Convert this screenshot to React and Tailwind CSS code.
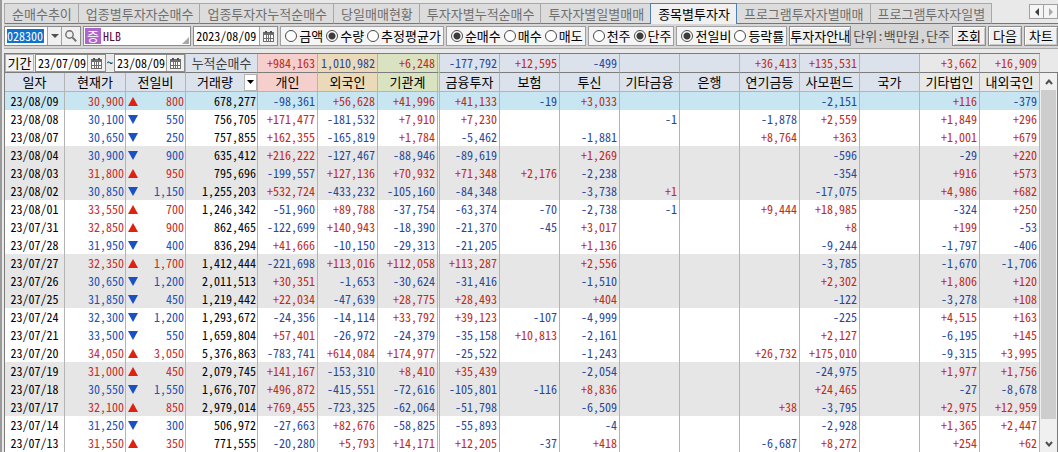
import React, { useState } from "react";

const TABS = [
  "순매수추이",
  "업종별투자자순매수",
  "업종투자자누적순매수",
  "당일매매현황",
  "투자자별누적순매수",
  "투자자별일별매매",
  "종목별투자자",
  "프로그램투자자별매매",
  "프로그램투자자일별",
];

const INVESTORS = [
  { name: "개인", total: "+984,163", bg: "bg-[#f5cfcb]" },
  { name: "외국인", total: "1,010,982", bg: "bg-[#ebdab9]" },
  { name: "기관계", total: "+6,248", bg: "bg-[#d9e3c1]" },
  { name: "금융투자", total: "-177,792", bg: "bg-[#dbe2ec]" },
  { name: "보험", total: "+12,595", bg: "bg-[#dbe2ec]" },
  { name: "투신", total: "-499", bg: "bg-[#dbe2ec]" },
  { name: "기타금융", total: "", bg: "bg-[#dbe2ec]" },
  { name: "은행", total: "", bg: "bg-[#dbe2ec]" },
  { name: "연기금등", total: "+36,413", bg: "bg-[#dbe2ec]" },
  { name: "사모펀드", total: "+135,531", bg: "bg-[#dbe2ec]" },
  { name: "국가", total: "", bg: "bg-[#dbe2ec]" },
  { name: "기타법인", total: "+3,662", bg: "bg-[#e8e8e8]" },
  { name: "내외국인", total: "+16,909", bg: "bg-[#e8e8e8]" },
];

// date, price, change (signed), volume, then one value per investor
const ROWS = [
  ["23/08/09", "30,900", "+800", "678,277", "-98,361", "+56,628", "+41,996", "+41,133", "-19", "+3,033", "", "", "", "-2,151", "", "+116", "-379"],
  ["23/08/08", "30,100", "-550", "756,705", "+171,477", "-181,532", "+7,910", "+7,230", "", "", "-1", "", "-1,878", "+2,559", "", "+1,849", "+296"],
  ["23/08/07", "30,650", "-250", "757,855", "+162,355", "-165,819", "+1,784", "-5,462", "", "-1,881", "", "", "+8,764", "+363", "", "+1,001", "+679"],
  ["23/08/04", "30,900", "-900", "635,412", "+216,222", "-127,467", "-88,946", "-89,619", "", "+1,269", "", "", "", "-596", "", "-29", "+220"],
  ["23/08/03", "31,800", "+950", "795,696", "-199,557", "+127,136", "+70,932", "+71,348", "+2,176", "-2,238", "", "", "", "-354", "", "+916", "+573"],
  ["23/08/02", "30,850", "-1,150", "1,255,203", "+532,724", "-433,232", "-105,160", "-84,348", "", "-3,738", "+1", "", "", "-17,075", "", "+4,986", "+682"],
  ["23/08/01", "33,550", "+700", "1,246,342", "-51,960", "+89,788", "-37,754", "-63,374", "-70", "-2,738", "-1", "", "+9,444", "+18,985", "", "-324", "+250"],
  ["23/07/31", "32,850", "+900", "862,465", "-122,699", "+140,943", "-18,390", "-21,370", "-45", "+3,017", "", "", "", "+8", "", "+199", "-53"],
  ["23/07/28", "31,950", "-400", "836,294", "+41,666", "-10,150", "-29,313", "-21,205", "", "+1,136", "", "", "", "-9,244", "", "-1,797", "-406"],
  ["23/07/27", "32,350", "+1,700", "1,412,444", "-221,698", "+113,016", "+112,058", "+113,287", "", "+2,556", "", "", "", "-3,785", "", "-1,670", "-1,706"],
  ["23/07/26", "30,650", "-1,200", "2,011,513", "+30,351", "-1,653", "-30,624", "-31,416", "", "-1,510", "", "", "", "+2,302", "", "+1,806", "+120"],
  ["23/07/25", "31,850", "-450", "1,219,442", "+22,034", "-47,639", "+28,775", "+28,493", "", "+404", "", "", "", "-122", "", "-3,278", "+108"],
  ["23/07/24", "32,300", "-1,200", "1,293,672", "-24,356", "-14,114", "+33,792", "+39,123", "-107", "-4,999", "", "", "", "-225", "", "+4,515", "+163"],
  ["23/07/21", "33,500", "-550", "1,659,804", "+57,401", "-26,972", "-24,379", "-35,158", "+10,813", "-2,161", "", "", "", "+2,127", "", "-6,195", "+145"],
  ["23/07/20", "34,050", "+3,050", "5,376,863", "-783,741", "+614,084", "+174,977", "-25,522", "", "-1,243", "", "", "+26,732", "+175,010", "", "-9,315", "+3,995"],
  ["23/07/19", "31,000", "+450", "2,079,745", "+141,167", "-153,310", "+8,410", "+35,439", "", "-2,054", "", "", "", "-24,975", "", "+1,977", "+1,756"],
  ["23/07/18", "30,550", "-1,550", "1,676,707", "+496,872", "-415,551", "-72,616", "-105,801", "-116", "+8,836", "", "", "", "+24,465", "", "-27", "-8,678"],
  ["23/07/17", "32,100", "+850", "2,979,014", "+769,455", "-723,325", "-62,064", "-51,798", "", "-6,509", "", "", "+38", "-3,795", "", "+2,975", "+12,959"],
  ["23/07/14", "31,250", "-300", "506,972", "-27,663", "+82,676", "-58,825", "-55,893", "", "-4", "", "", "", "-2,928", "", "+1,365", "+2,447"],
  ["23/07/13", "31,550", "+350", "771,555", "-20,280", "+5,793", "+14,171", "+12,205", "-37", "+418", "", "", "-6,687", "+8,272", "", "+254", "+62"],
];

const toneOf = (value) => (value.startsWith("+") ? "text-[#c0281e]" : "text-[#1f489c]");

// the institution total is closed by a double line
const edgeOf = (i) => (i === 2 ? "border-r-3 [border-right-style:double]" : "border-r");

function rowBg(i) {
  if (i === 0) return "bg-[#c8e6f1]";
  return (i >= 3 && i <= 5) || (i >= 9 && i <= 11) || (i >= 15 && i <= 17) ? "bg-[#e6e6e6]" : "bg-white";
}

function CalendarIcon() {
  return (
    <svg width="11" height="11" viewBox="0 0 11 11" shapeRendering="crispEdges" aria-hidden="true">
      <path d="M0 1h11v10H0z" fill="#6e6e6e" />
      <path d="M2 0h2v2H2zM7 0h2v2H7z" fill="#505050" />
      <path d="M1 4h2v3H1zM4 4h1v3H4zM6 4h1v3H6zM8 4h2v3H8zM1 8h2v2H1zM4 8h1v2H4zM6 8h1v2H6zM8 8h2v2H8z" fill="#fff" />
    </svg>
  );
}

function DateField({ label, value, className }) {
  return (
    <div className={`flex border border-[#8c8c8c] bg-white text-[12px] ${className}`}>
      <input aria-label={label} defaultValue={value} className="w-0 min-w-0 flex-1 pl-0.5 outline-none" />
      <button aria-label={`${label} 달력`} className="flex w-[18px] shrink-0 items-center justify-center border-l border-[#a0a0a0] bg-[#f0f0f0]">
        <CalendarIcon />
      </button>
    </div>
  );
}

function RadioGroup({ name, options, initial }) {
  const [picked, setPicked] = useState(initial);
  return (
    <div role="radiogroup" aria-label={name} className="flex shrink-0 items-center gap-[3px] border border-[#a0a0a0] bg-[#f5f5f5] pr-0.5 pl-1">
      {options.map((option) => (
        <label key={option} className="flex items-center gap-0.5">
          <input
            type="radio"
            name={name}
            checked={picked === option}
            onChange={() => setPicked(option)}
            className="size-3 appearance-none rounded-full border border-[#4a4a4a] bg-white checked:bg-[radial-gradient(circle,#3c3c3c_0_3px,#fff_4px)]"
          />
          {option}
        </label>
      ))}
    </div>
  );
}

function ToolButton({ children, className }) {
  return (
    <button className={`flex shrink-0 items-center justify-center border border-[#8c8c8c] bg-[#f0f0f0] shadow-[inset_1px_1px_0_#fff,inset_-1px_-1px_0_#c8c8c8] ${className}`}>
      {children}
    </button>
  );
}

export default function App() {
  const [tab, setTab] = useState("종목별투자자");

  return (
    <div className="overflow-hidden border-l-2 border-[#9a9a9a] bg-[#e9e9e9] pl-0.5 font-['Noto_Sans_Mono_CJK_KR','Noto_Sans_CJK_KR',monospace] text-[13px] leading-4 whitespace-nowrap text-black">
      <div className="flex border-b border-[#4f7fb8] pt-[3px]">
        <div role="tablist" className="-mb-px flex border-l border-[#a8a8a8]">
          {TABS.map((name) => (
            <button
              key={name}
              role="tab"
              aria-selected={tab === name}
              onClick={() => setTab(name)}
              className={`h-[21px] border-t border-r pr-1.5 pl-[7px] ${
                tab === name
                  ? "border-[#4f7fb8] bg-[#f0f0f0] shadow-[-1px_0_0_#4f7fb8]"
                  : "border-t-[#a8a8a8] border-r-[#a8a8a8] border-b border-b-[#4f7fb8] bg-[#dcdcdc] text-[#6e6e6e]"
              }`}
            >
              {name}
            </button>
          ))}
        </div>
        <div className="mt-px ml-auto flex">
          <button aria-label="이전 탭" className="flex h-[15px] w-[15px] items-center justify-center border border-[#a0a0a0] bg-[#f5f5f5]">
            <svg width="4" height="8" viewBox="0 0 4 8" aria-hidden="true"><path d="M4 0v8L0 4z" fill="#404040" /></svg>
          </button>
          <button aria-label="다음 탭" className="flex h-[15px] w-[14px] items-center justify-center border border-l-0 border-[#a0a0a0] bg-[#f5f5f5]">
            <svg width="4" height="8" viewBox="0 0 4 8" aria-hidden="true"><path d="M0 0v8l4-4z" fill="#a8a8a8" /></svg>
          </button>
        </div>
      </div>

      <div className="flex h-[25px] gap-0.5 border-b border-[#a8a8a8] bg-[#d6d6d6] py-0.5">
        <div className="flex w-[77px] shrink-0 border border-[#8c8c8c] bg-white text-[12px]">
          <input aria-label="종목코드" defaultValue="028300" className="my-0.5 ml-0.5 w-[37px] bg-[#0f72cc] text-white outline-none" />
          <button aria-label="종목 목록" className="ml-auto flex w-[14px] items-center justify-center border-l border-[#a0a0a0] bg-[#f0f0f0]">
            <svg width="8" height="4" viewBox="0 0 8 4" aria-hidden="true"><path d="M0 0h8L4 4z" fill="#505050" /></svg>
          </button>
          <button aria-label="종목 검색" className="flex w-[19px] items-center justify-center border-l border-[#a0a0a0] bg-[#f0f0f0]">
            <svg width="12" height="12" viewBox="0 0 12 12" fill="none" stroke="#707070" aria-hidden="true">
              <circle cx="4.5" cy="4.5" r="3.7" strokeWidth="1.4" />
              <path d="M7.4 7.4l3.8 3.8" strokeWidth="2" />
            </svg>
          </button>
        </div>
        <div className="relative flex min-w-[60px] flex-[0_1_109px] items-center border border-[#8c8c8c] bg-white pl-px">
          <span className="w-4 bg-[#b065cc] text-center text-white">증</span>
          <input aria-label="종목명" defaultValue="HLB" className="min-w-0 flex-1 pl-0.5 text-[12px] text-[#5a0a3c] outline-none" />
          <svg width="7" height="7" viewBox="0 0 7 7" className="absolute right-px bottom-px" aria-hidden="true"><path d="M7 0v7H0z" fill="#a8a8a8" /></svg>
        </div>
        <DateField label="기준일" value="2023/08/09" className="w-[85px] shrink-0" />
        <RadioGroup name="값" options={["금액", "수량", "추정평균가"]} initial="수량" />
        <RadioGroup name="매매" options={["순매수", "매수", "매도"]} initial="순매수" />
        <RadioGroup name="주" options={["천주", "단주"]} initial="단주" />
        <RadioGroup name="비교" options={["전일비", "등락률"]} initial="전일비" />
        <ToolButton className="w-[62px]">투자자안내</ToolButton>
        <span className="flex flex-1 items-center justify-center text-[#505050]">단위:백만원,단주</span>
        <ToolButton className="w-[34px]">조회</ToolButton>
        <ToolButton className="w-[34px]">다음</ToolButton>
        <ToolButton className="w-[34px]">차트</ToolButton>
      </div>

      <div className="mt-1 flex">
        <table className="w-full min-w-0 flex-1 table-fixed border-separate border-spacing-0 border-t border-l border-[#7c7c7c]">
          <colgroup>
            <col className="w-[60px]" />
            <col className="w-[61px]" />
            <col className="w-[60px]" />
            <col className="w-[72px]" />
            {INVESTORS.map((inv, i) => (
              <col key={inv.name} className={i === 2 ? "w-[62px]" : "w-[60px]"} />
            ))}
          </colgroup>
          <thead>
            <tr className="h-[19px]">
              <td colSpan={3} className="border-r border-b border-[#7c7c7c] border-r-[#b4b4b4] bg-[#e9e9e9] p-0">
                <div className="flex h-[18px] gap-px">
                  <span className="w-[29px] shrink-0 border border-[#b4b4b4] bg-[#f2f2f2] text-center">기간</span>
                  <DateField label="시작일" value="23/07/09" className="min-w-0 flex-1" />
                  <span className="w-1.5 shrink-0 text-center text-[12px]">~</span>
                  <DateField label="종료일" value="23/08/09" className="min-w-0 flex-1" />
                </div>
              </td>
              <th scope="row" className="border-r border-b border-[#7c7c7c] border-r-[#b4b4b4] bg-[#dbe2ec] p-0 font-normal text-[#404040]">누적순매수</th>
              {INVESTORS.map((inv, i) => (
                <td key={inv.name} className={`border-b border-[#7c7c7c] border-r-[#b4b4b4] p-0 pr-0.5 text-right text-[12px] ${edgeOf(i)} ${inv.bg} ${toneOf(inv.total)}`}>
                  {inv.total}
                </td>
              ))}
            </tr>
            <tr className="h-[19px]">
              {["일자", "현재가", "전일비"].map((name) => (
                <th key={name} scope="col" className="border-r border-b border-[#b4b4b4] bg-[#dbe2ec] p-0 font-normal">{name}</th>
              ))}
              <th scope="col" className="border-r border-b border-[#b4b4b4] bg-[#dbe2ec] p-0 font-normal">
                <div className="flex h-[18px] items-center">
                  <span className="flex-1">거래량</span>
                  <button aria-label="거래량 선택" className="flex h-[17px] w-[13px] items-center justify-center border border-[#b4b4b4] bg-white">
                    <svg width="7" height="4" viewBox="0 0 7 4" aria-hidden="true"><path d="M0 0h7L3.5 4z" fill="#000" /></svg>
                  </button>
                </div>
              </th>
              {INVESTORS.map((inv, i) => (
                <th key={inv.name} scope="col" className={`border-b border-[#b4b4b4] p-0 font-normal ${edgeOf(i)} ${inv.bg}`}>{inv.name}</th>
              ))}
            </tr>
          </thead>
          <tbody className="text-[12px]">
            {ROWS.map(([date, price, change, volume, ...values], r) => {
              const up = change.startsWith("+");
              const tone = up ? "text-[#cc2a1e]" : "text-[#1e50b8]";
              return (
                <tr key={date} className={`h-[18px] ${rowBg(r)}`}>
                  <td className="border-r border-[#b4b4b4] p-0 text-center">{date}</td>
                  <td className={`border-r border-[#b4b4b4] p-0 pr-px text-right ${tone}`}>{price}</td>
                  <td className={`border-r border-[#b4b4b4] p-0 ${tone}`}>
                    <div className="flex items-center justify-between pr-px pl-0.5">
                      <svg width="10" height="9" viewBox="0 0 10 9" role="img" aria-label={up ? "상승" : "하락"}>
                        <path d={up ? "M5 0l5 9H0z" : "M0 0h10L5 9z"} fill={up ? "#e02010" : "#1a50c4"} />
                      </svg>
                      {change.slice(1)}
                    </div>
                  </td>
                  <td className="border-r border-[#b4b4b4] p-0 pr-px text-right">{volume}</td>
                  {values.map((value, i) => (
                    <td key={i} className={`border-[#b4b4b4] p-0 pr-0.5 text-right ${edgeOf(i)} ${toneOf(value)}`}>{value}</td>
                  ))}
                </tr>
              );
            })}
          </tbody>
        </table>
        <div className="mt-[19px] flex w-[18px] shrink-0 flex-col border-t border-r border-[#7c7c7c] bg-[#f0f0f0] px-px">
          <button aria-label="위로" className="flex h-[17px] items-center justify-center">
            <svg width="8" height="6" viewBox="0 0 8 6" fill="none" stroke="#505050" strokeWidth="2" aria-hidden="true"><path d="M1 5l3-3.5L7 5" /></svg>
          </button>
          <div className="flex-1 bg-[#cdcdcd]" />
          <div className="h-4" />
          <button aria-label="아래로" className="flex h-[17px] items-center justify-center">
            <svg width="8" height="6" viewBox="0 0 8 6" fill="none" stroke="#505050" strokeWidth="2" aria-hidden="true"><path d="M1 1l3 3.5L7 1" /></svg>
          </button>
        </div>
      </div>
    </div>
  );
}
